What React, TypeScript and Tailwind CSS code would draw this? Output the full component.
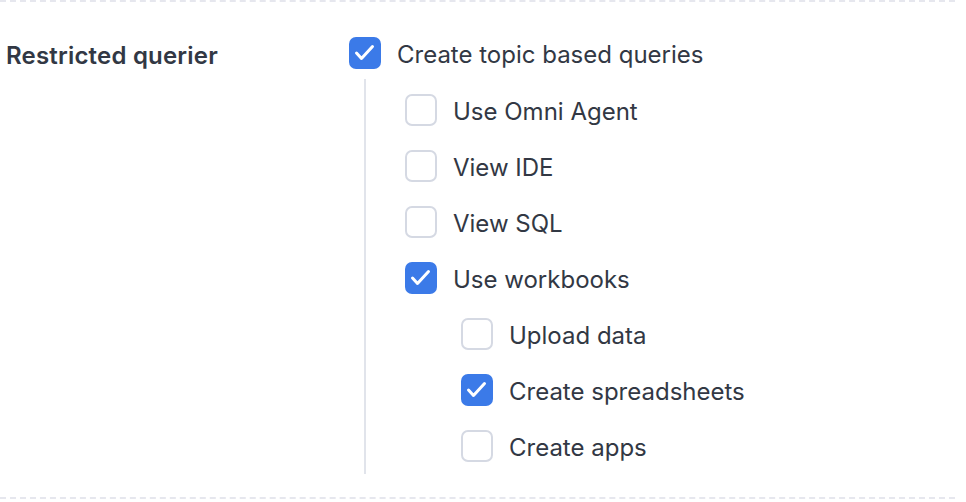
import React, { useState } from 'react';

type Perm = {
  id: string;
  label: string;
  checked: boolean;
  children?: Perm[];
};

const initialPerms: Perm[] = [
  {
    id: 'topic',
    label: 'Create topic based queries',
    checked: true,
    children: [
      { id: 'agent', label: 'Use Omni Agent', checked: false },
      { id: 'ide', label: 'View IDE', checked: false },
      { id: 'sql', label: 'View SQL', checked: false },
      {
        id: 'workbooks',
        label: 'Use workbooks',
        checked: true,
        children: [
          { id: 'upload', label: 'Upload data', checked: false },
          { id: 'sheets', label: 'Create spreadsheets', checked: true },
          { id: 'apps', label: 'Create apps', checked: false },
        ],
      },
    ],
  },
];

const toggle = (perms: Perm[], id: string): Perm[] =>
  perms.map((p) =>
    p.id === id
      ? { ...p, checked: !p.checked }
      : { ...p, children: p.children ? toggle(p.children, id) : undefined }
  );

const Checkbox = ({ checked, onClick }: { checked: boolean; onClick: () => void }) => (
  <button
    onClick={onClick}
    className={`w-8 h-8 shrink-0 rounded-[7px] flex items-center justify-center ${
      checked ? 'bg-[#3b7ae8]' : 'bg-white border-2 border-[#d5d9e3]'
    }`}
  >
    {checked && (
      <svg width="32" height="32" viewBox="0 0 32 32" fill="none">
        <path d="M7.5 16l5 5.5 11-12" stroke="white" strokeWidth="3" strokeLinecap="round" strokeLinejoin="round" />
      </svg>
    )}
  </button>
);

const PermRow = ({ perm, onToggle, isRoot }: { perm: Perm; onToggle: (id: string) => void; isRoot?: boolean }) => (
  <div className="flex flex-col">
    <label className="h-14 flex items-center gap-4 cursor-pointer">
      <Checkbox checked={perm.checked} onClick={() => onToggle(perm.id)} />
      <span className="text-[24px] text-[#323844] leading-none mt-[3px]">{perm.label}</span>
    </label>
    {perm.children && (
      <div className={`flex ${isRoot ? 'mt-[1px]' : ''}`}>
        <div className="w-14 shrink-0 flex justify-center">
          {isRoot && <div className="w-[2px] bg-[#e1e4eb] ml-[-24px] mt-[-3px]" />}
        </div>
        <div className="flex flex-col">
          {perm.children.map((c) => (
            <PermRow key={c.id} perm={c} onToggle={onToggle} />
          ))}
        </div>
      </div>
    )}
  </div>
);

export default function App() {
  const [perms, setPerms] = useState(initialPerms);

  return (
    <div className="w-[966px] h-[502px] bg-white pr-[11px]" style={{ fontFamily: 'Inter, "Noto Sans", sans-serif' }}>
      <div className="h-[499px] border-y-2 border-dashed border-[#e6e7ee] flex pt-[23px]">
        <div className="w-[349px] shrink-0 pl-[6px] h-14 flex items-center pt-[5px]">
          <span className="text-[24px] font-semibold text-[#323844] leading-none tracking-[0.2px]">Restricted querier</span>
        </div>
        <div className="flex flex-col">
          {perms.map((p) => (
            <PermRow key={p.id} perm={p} onToggle={(id) => setPerms(toggle(perms, id))} isRoot />
          ))}
        </div>
      </div>
    </div>
  );
}
